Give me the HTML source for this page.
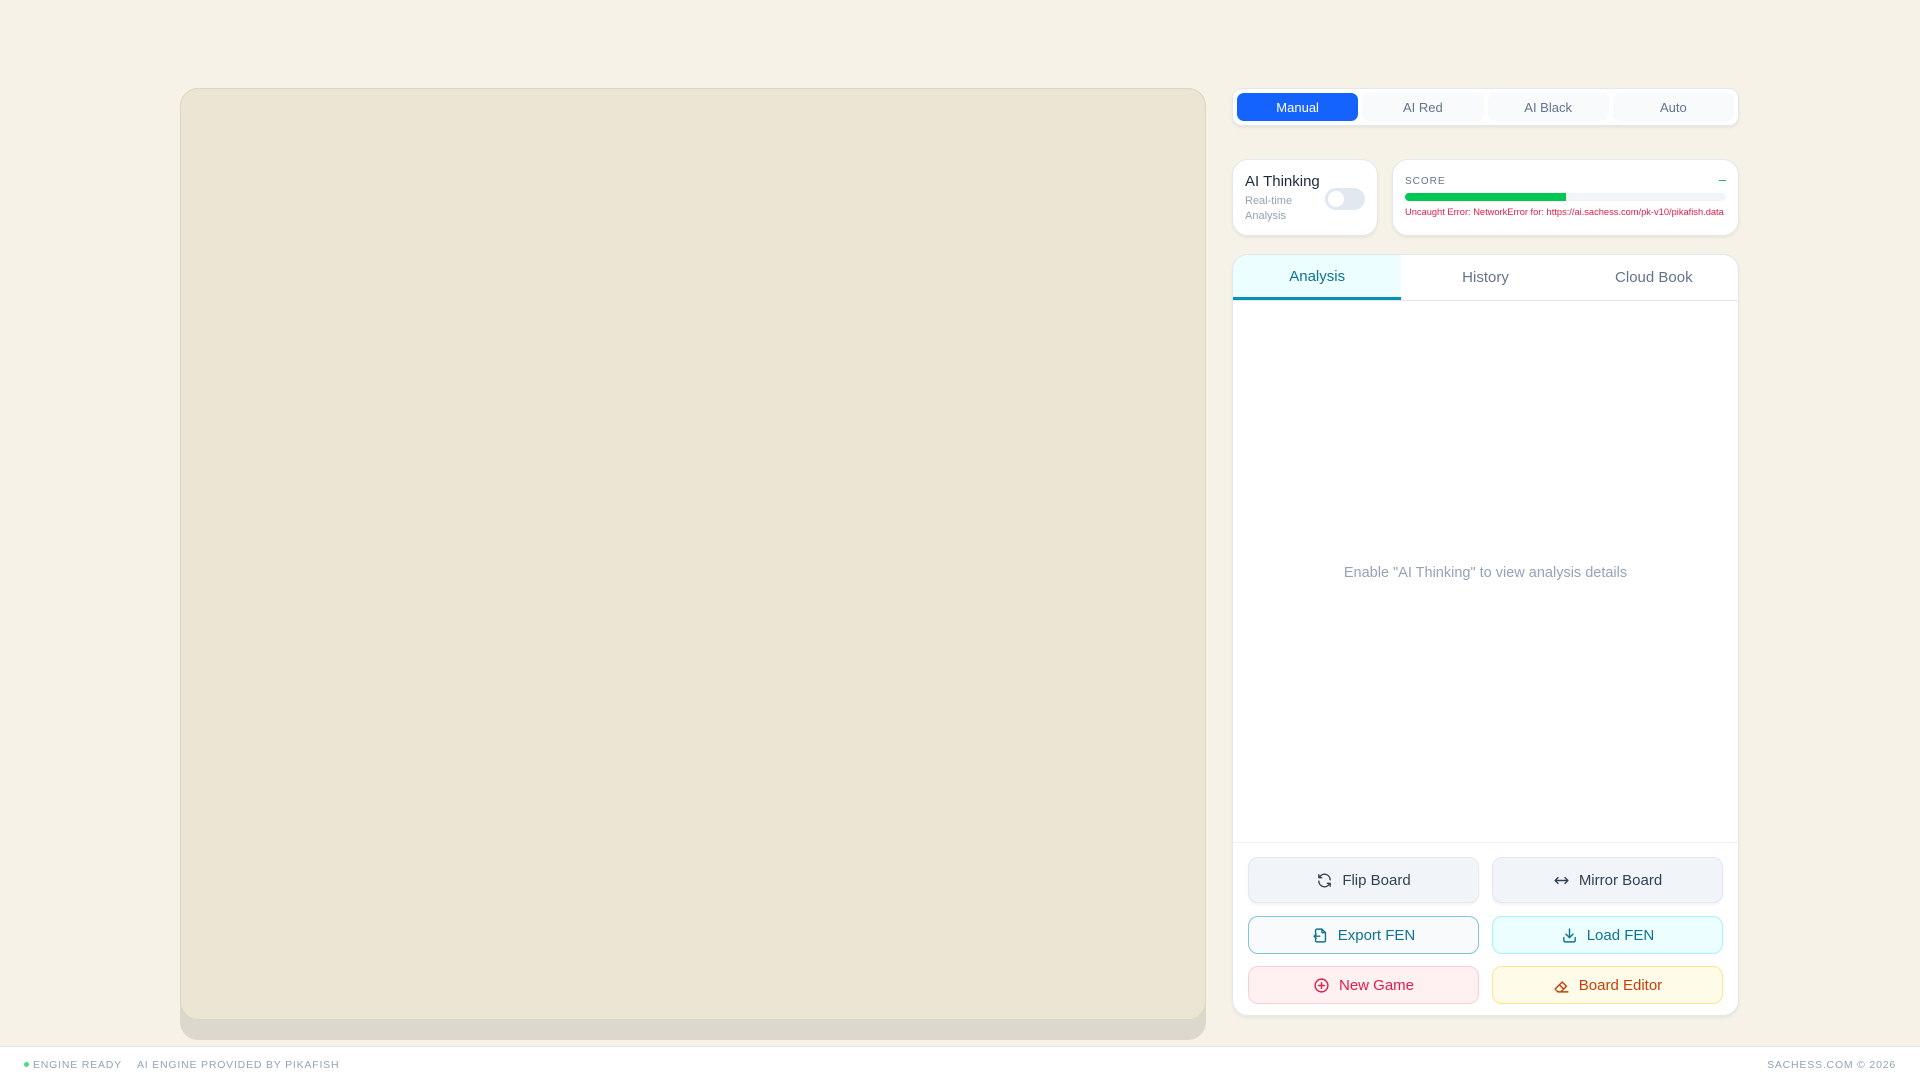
<!DOCTYPE html>
<html><head><meta charset="utf-8"><style>
*{box-sizing:border-box;margin:0;padding:0}
body{width:1920px;height:1080px;background:#f6f2e7;font-family:"Liberation Sans",sans-serif;position:relative;overflow:hidden}
.abs{position:absolute}
.board{left:180px;top:88px;width:1026px;height:952px;background:#ddd8cd;border-radius:18px}
.board .top{position:absolute;left:0;top:0;right:0;height:932px;background:#ebe5d3;border:1.5px solid #dcd6c2;border-radius:18px}
.card{background:#fff;border:1.5px solid #e2e8f0;border-radius:16px;box-shadow:0 2px 3px rgba(0,0,0,.06)}
.mode{left:1232px;top:88px;width:507px;height:38px;border-radius:10px;padding:4px;display:flex;gap:4px}
.mode div{flex:1;border-radius:7px;background:#f8fafc;color:#64748b;font-size:13px;display:flex;align-items:center;justify-content:center}
.mode div.on{background:#1463ff;color:#fff}
.ai{left:1232px;top:159px;width:146px;height:77px;padding:13px 12px}
.ai h3{font-weight:normal;font-size:15px;color:#1e293b}
.ai p{font-size:11px;color:#94a3b8;line-height:15px;margin-top:4px;width:60px}
.tog{position:absolute;right:12px;top:28px;width:40px;height:22px;border-radius:11px;background:#e2e8f0}
.tog:after{content:"";position:absolute;left:3px;top:3px;width:16px;height:16px;border-radius:50%;background:#fff}
.score{left:1392px;top:159px;width:347px;height:77px;padding:16px 12px}
.score .lbl{font-size:10px;color:#64748b;letter-spacing:1px}
.score .dash{position:absolute;right:12px;top:12px;color:#16a34a;font-size:13px}
.bar{margin-top:6px;height:8px;border-radius:4px;background:#f1f5f9;overflow:hidden}
.bar div{width:50%;height:100%;background:#00c853}
.err{font-size:9.3px;color:#e11d48;margin-top:6px;white-space:nowrap}
.main{left:1232px;top:254px;width:507px;height:762px;overflow:hidden}
.tabs{display:flex;height:46px;border-bottom:1.5px solid #e2e8f0}
.tabs div{flex:1;display:flex;align-items:center;justify-content:center;font-size:15px;color:#64748b}
.tabs div.on{background:#ecfeff;color:#0e7490;border-bottom:3px solid #0891b2}
.empty{position:absolute;top:310px;width:100%;text-align:center;color:#94a3b8;font-size:14.5px}
.sep{position:absolute;top:587px;left:0;right:0;border-top:1.5px solid #eef2f6}
.btn{position:absolute;width:231px;display:flex;align-items:center;justify-content:center;gap:9px;font-size:15px;border-radius:10px;border:1.5px solid}
.btn svg{width:17px;height:17px;fill:none;stroke:currentColor;stroke-width:2;stroke-linecap:round;stroke-linejoin:round}
.gray{background:#f1f5f9;border-color:#e2e8f0;color:#334155;height:46px;top:602px;box-shadow:0 2px 2px rgba(0,0,0,.05)}
.exp{background:#f8fafc;border-color:#7dc6de;color:#0e7490;height:38px;top:661px}
.load{background:#ecfeff;border-color:#a5f3fc;color:#0e7490;height:38px;top:661px}
.new{background:#fff1f2;border-color:#fecdd3;color:#e11d48;height:38px;top:711px}
.ed{background:#fefce8;border-color:#fde68a;color:#c2410c;height:38px;top:711px}
.footer{left:0;top:1046px;width:1920px;height:34px;background:#fff;border-top:1.5px solid #dbe9f0;font-size:10.5px;letter-spacing:0.8px;color:#94a3b8}
.footer span{position:absolute;top:12px}
</style></head><body>
<div class="abs board"><div class="top"></div></div>
<div class="abs card mode"><div class="on">Manual</div><div>AI Red</div><div>AI Black</div><div>Auto</div></div>
<div class="abs card ai"><h3>AI Thinking</h3><p>Real-time Analysis</p><div class="tog"></div></div>
<div class="abs card score"><div class="lbl">SCORE</div><div class="dash">–</div><div class="bar"><div></div></div><div class="err">Uncaught Error: NetworkError for: https://ai.sachess.com/pk-v10/pikafish.data</div></div>
<div class="abs card main">
<div class="tabs"><div class="on">Analysis</div><div>History</div><div>Cloud Book</div></div>
<div class="empty">Enable "AI Thinking" to view analysis details</div>
<div class="sep"></div>
<div class="btn gray" style="left:15px"><svg viewBox="0 0 24 24"><path d="M20 11a8 8 0 0 0-14.5-4.5M4 4v4h4M4 13a8 8 0 0 0 14.5 4.5M20 20v-4h-4"/></svg>Flip Board</div>
<div class="btn gray" style="left:259px"><svg viewBox="0 0 24 24"><path d="M3 12h18M7 8l-4 4 4 4M17 8l4 4-4 4"/></svg>Mirror Board</div>
<div class="btn exp" style="left:15px"><svg viewBox="0 0 24 24"><path d="M14 3H7a2 2 0 0 0-2 2v4M5 17v2a2 2 0 0 0 2 2h10a2 2 0 0 0 2-2V8l-5-5v5h5M3 13h8M6 10l-3 3 3 3"/></svg>Export FEN</div>
<div class="btn load" style="left:259px"><svg viewBox="0 0 24 24"><path d="M4 15v4a2 2 0 0 0 2 2h12a2 2 0 0 0 2-2v-4M12 3v12M7 10l5 5 5-5"/></svg>Load FEN</div>
<div class="btn new" style="left:15px"><svg viewBox="0 0 24 24"><circle cx="12" cy="12" r="9"/><path d="M12 8v8M8 12h8"/></svg>New Game</div>
<div class="btn ed" style="left:259px"><svg viewBox="0 0 24 24"><path d="M7 21l-4-4 10-10 6 6-8 8H7zM21 21H11M9 11l6 6"/></svg>Board Editor</div>
</div>
<div class="abs footer">
<span style="left:24px"><span style="position:static;display:inline-block;width:5px;height:5px;border-radius:50%;background:#4ade80;margin-right:4px;vertical-align:1px"></span>ENGINE READY</span>
<span style="left:137px">AI ENGINE PROVIDED BY PIKAFISH</span>
<span style="right:24px">SACHESS.COM © 2026</span>
</div>
</body></html>
